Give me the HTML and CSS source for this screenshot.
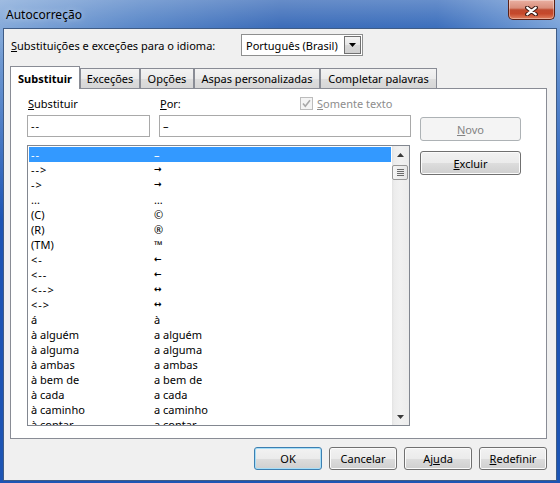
FILE: index.html
```html
<!DOCTYPE html>
<html lang="pt-BR">
<head>
<meta charset="utf-8">
<title>Autocorreção</title>
<link rel="stylesheet" href="styles.css">
</head>
<body>
<div class="window">
  <div class="titlebar">
    <span class="title">Autocorreção</span>
    <div class="close">
      <svg width="13" height="10" viewBox="0 0 13 10"><path d="M2.2 1.6 L10.8 8.4 M10.8 1.6 L2.2 8.4" stroke="#3a1a14" stroke-width="4.2" stroke-linecap="round"/><path d="M2.2 1.6 L10.8 8.4 M10.8 1.6 L2.2 8.4" stroke="#ffffff" stroke-width="2.2" stroke-linecap="round"/></svg>
    </div>
  </div>
  <div class="client">
    <div class="langrow">
      <span class="langlabel"><u>S</u>ubstituições e exceções para o idioma:</span>
      <div class="combo">
        <span class="combo-text">Português (Brasil)</span>
        <span class="combo-btn"><svg width="7" height="4" viewBox="0 0 7 4"><path d="M0 0 H7 L3.5 4 Z" fill="#000"/></svg></span>
      </div>
    </div>
    <div class="tabs">
      <div class="tab active t1">Substituir</div>
      <div class="tab t2">Exceções</div>
      <div class="tab t3">Opções</div>
      <div class="tab t4">Aspas personalizadas</div>
      <div class="tab t5">Completar palavras</div>
    </div>
    <div class="panel">
      <div class="leftcol">
        <div class="labels">
          <span class="lbl-sub"><u>S</u>ubstituir</span>
          <span class="lbl-por"><u>P</u>or:</span>
          <span class="chk">
            <span class="chkbox"><svg width="11" height="11" viewBox="0 0 11 11"><path d="M2 5.5 L4.3 8.2 L9 2.2" fill="none" stroke="#a8a8a8" stroke-width="1.6"/></svg></span>
            <span class="chk-label"><u>S</u>omente texto</span>
          </span>
        </div>
        <div class="inputs">
          <div class="input in1"><span class="dash">--</span></div>
          <div class="input in2">–</div>
        </div>
        <div class="list">
          <div class="rows">
            <div class="row sel"><span class="c1 dash">--</span><span class="c2">–</span></div>
            <div class="row"><span class="c1 dash">--&gt;</span><span class="c2 arw">→</span></div>
            <div class="row"><span class="c1 dash">-&gt;</span><span class="c2 arw">→</span></div>
            <div class="row"><span class="c1">...</span><span class="c2">…</span></div>
            <div class="row"><span class="c1">(C)</span><span class="c2">©</span></div>
            <div class="row"><span class="c1">(R)</span><span class="c2">®</span></div>
            <div class="row"><span class="c1">(TM)</span><span class="c2">™</span></div>
            <div class="row"><span class="c1 dash">&lt;-</span><span class="c2 arw">←</span></div>
            <div class="row"><span class="c1 dash">&lt;--</span><span class="c2 arw">←</span></div>
            <div class="row"><span class="c1 dash">&lt;--&gt;</span><span class="c2 arw">↔</span></div>
            <div class="row"><span class="c1 dash">&lt;-&gt;</span><span class="c2 arw">↔</span></div>
            <div class="row"><span class="c1">á</span><span class="c2">à</span></div>
            <div class="row"><span class="c1">à alguém</span><span class="c2">a alguém</span></div>
            <div class="row"><span class="c1">à alguma</span><span class="c2">a alguma</span></div>
            <div class="row"><span class="c1">à ambas</span><span class="c2">a ambas</span></div>
            <div class="row"><span class="c1">à bem de</span><span class="c2">a bem de</span></div>
            <div class="row"><span class="c1">à cada</span><span class="c2">a cada</span></div>
            <div class="row"><span class="c1">à caminho</span><span class="c2">a caminho</span></div>
            <div class="row"><span class="c1">à contar</span><span class="c2">a contar</span></div>
          </div>
          <div class="scrollbar">
            <div class="sb-arrow"><svg width="7" height="4" viewBox="0 0 7 4"><path d="M3.5 0 L7 4 H0 Z" fill="#3a3a3a"/></svg></div>
            <div class="sb-thumb"><span class="grip"></span><span class="grip"></span><span class="grip"></span><span class="grip"></span></div>
            <div class="sb-arrow down"><svg width="7" height="4" viewBox="0 0 7 4"><path d="M0 0 H7 L3.5 4 Z" fill="#3a3a3a"/></svg></div>
          </div>
        </div>
      </div>
      <div class="rightcol">
        <button class="btn side disabled"><u>N</u>ovo</button>
        <button class="btn side"><u>E</u>xcluir</button>
      </div>
    </div>
    <div class="bottom">
      <button class="btn foot default">OK</button>
      <button class="btn foot">Cancelar</button>
      <button class="btn foot">Aj<u>u</u>da</button>
      <button class="btn foot"><u>R</u>edefinir</button>
    </div>
  </div>
</div>
</body>
</html>
```
FILE: styles.css
```css
* { box-sizing: border-box; }
html, body { margin: 0; padding: 0; }
body {
  width: 560px;
  height: 483px;
  overflow: hidden;
  background: #ffffff;
  font-family: "Noto Sans", "Open Sans", sans-serif;
  font-size: 11px;
  color: #000;
}
u { text-decoration: underline; text-underline-offset: 1px; }

.window {
  width: 560px;
  height: 483px;
  display: flex;
  flex-direction: column;
  padding: 0 3px 2px 3px;
  background:
    linear-gradient(to bottom, rgba(255,255,255,0.28) 0, rgba(255,255,255,0.08) 28px, rgba(255,255,255,0) 60px),
    linear-gradient(to bottom, rgba(29,85,180,0) 40px, rgba(29,85,180,1) 220px),
    linear-gradient(to right, #7aa2d6 0%, #4a7cc3 25%, #2b60b3 50%, #2c63b7 78%, #6f9bd6 100%);
}

.titlebar {
  height: 28px;
  display: flex;
  align-items: center;
  padding-left: 3px;
}
.title {
  font-size: 12px;
  color: #000;
  text-shadow: 0 0 6px rgba(255,255,255,0.6);
}
.close {
  margin-left: auto;
  margin-right: 2px;
  align-self: flex-start;
  width: 47px;
  height: 20px;
  display: flex;
  align-items: center;
  justify-content: center;
  padding-top: 2px;
  border: 1px solid #5a2117;
  border-top: none;
  border-radius: 0 0 5px 5px;
  background: linear-gradient(to bottom, #eab0a2 0%, #d98e7b 42%, #c04a2f 52%, #c5482b 72%, #e0805f 100%);
  box-shadow: inset 0 0 0 1px rgba(255,255,255,0.35);
}

.client {
  flex: 1;
  border: 1px solid #3f5c86;
  background: #f0f0f0;
  display: flex;
  flex-direction: column;
}

.langrow {
  margin-top: 5px;
  height: 22px;
  display: flex;
  align-items: center;
}
.langlabel {
  width: 237px;
  padding-left: 7px;
  white-space: nowrap;
}
.combo {
  width: 122px;
  height: 22px;
  border: 1px solid #8e8f8f;
  background: #fff;
  display: flex;
  align-items: center;
}
.combo-text { padding-left: 4px; flex: 1; white-space: nowrap; }
.combo-btn {
  width: 17px;
  height: 18px;
  margin-right: 1px;
  border: 1px solid #707070;
  background: linear-gradient(to bottom, #f4f4f4, #e6e6e6 50%, #d8d8d8 51%, #cfcfcf);
  display: flex;
  align-items: center;
  justify-content: center;
}

.tabs {
  margin-top: 10px;
  height: 22px;
  display: flex;
  align-items: flex-end;
  padding-left: 6px;
}
.tab {
  height: 20px;
  border: 1px solid #898c95;
  border-bottom: none;
  background: linear-gradient(to bottom, #f3f3f3, #ebebeb 50%, #dedede 51%, #d6d6d6);
  display: flex;
  align-items: center;
  justify-content: center;
  white-space: nowrap;
}
.tab.active {
  height: 23px;
  margin-bottom: -1px;
  background: #fff;
  font-weight: bold;
  position: relative;
  z-index: 1;
}
.t1 { width: 70px; }
.t2 { width: 60px; }
.t3 { width: 54px; }
.t4 { width: 126px; }
.t5 { width: 117px; }

.panel {
  margin-left: 6px;
  width: 537px;
  height: 351px;
  border: 1px solid #898c95;
  background: #fff;
  display: flex;
  padding-left: 16px;
}
.leftcol { width: 384px; }
.labels {
  margin-top: 6px;
  height: 16px;
  display: flex;
  align-items: center;
  white-space: nowrap;
}
.lbl-sub { width: 133px; padding-left: 1px; }
.lbl-por { width: 140px; }
.chk { display: flex; align-items: center; gap: 4px; }
.chkbox {
  width: 13px;
  height: 13px;
  border: 1px solid #bcbcbc;
  background: #f4f4f4;
  display: flex;
  align-items: center;
  justify-content: center;
}
.chk-label { color: #8d8d8d; }

.inputs {
  margin-top: 4px;
  display: flex;
  height: 22px;
}
.input {
  height: 22px;
  border: 1px solid #a9a9a9;
  background: #fff;
  padding-left: 3px;
  line-height: 20px;
}
.in1 { width: 123px; }
.in2 { width: 252px; margin-left: 9px; }

.dash { letter-spacing: 1px; }

.list {
  margin-top: 8px;
  width: 383px;
  height: 281px;
  border: 1px solid #828790;
  display: flex;
  overflow: hidden;
}
.rows { flex: 1; padding: 1px; overflow: hidden; }
.row {
  height: 15px;
  line-height: 15px;
  display: flex;
  padding-left: 2px;
  white-space: nowrap;
}
.row.sel { background: #3399ff; color: #fff; }
.c1 { width: 123px; flex: none; }
.arw { font-family: "DejaVu Sans", sans-serif; font-size: 9px; font-weight: bold; }

.scrollbar {
  width: 17px;
  display: flex;
  flex-direction: column;
  background: linear-gradient(to right, #e2e2e2 0, #ececec 2px, #f1f1f1 8px, #ececec 100%);
}
.sb-arrow {
  height: 17px;
  display: flex;
  align-items: center;
  justify-content: center;
}
.sb-arrow.down { margin-top: auto; }
.sb-thumb {
  margin: 2px 1px 0 0;
  height: 15px;
  border: 1px solid #979797;
  border-radius: 2px;
  background: linear-gradient(to right, #f5f5f5, #e6e6e6);
  display: flex;
  flex-direction: column;
  align-items: center;
  justify-content: center;
  gap: 1px;
}
.grip { width: 7px; height: 1px; background: #6b6b6b; }

.rightcol {
  margin-left: 9px;
  padding-top: 28px;
  display: flex;
  flex-direction: column;
  gap: 10px;
}

.btn {
  font-family: inherit;
  font-size: 11px;
  color: #000;
  padding: 0;
  border: 1px solid #707070;
  border-radius: 3px;
  background: linear-gradient(to bottom, #f2f2f2 0%, #ebebeb 50%, #dddddd 51%, #cfcfcf 100%);
  box-shadow: inset 0 0 0 1px #fbfbfb;
}
.btn.side { width: 101px; height: 24px; }
.btn.disabled {
  border-color: #adb2b5;
  background: #f4f4f4;
  color: #838383;
  box-shadow: none;
}
.btn.default {
  border-color: #3c7fb1;
  box-shadow: inset 0 0 0 1px #a6def8;
}

.bottom {
  margin-top: 8px;
  display: flex;
  justify-content: flex-end;
  gap: 7px;
  padding-right: 9px;
}
.btn.foot { width: 68px; height: 23px; }
```
